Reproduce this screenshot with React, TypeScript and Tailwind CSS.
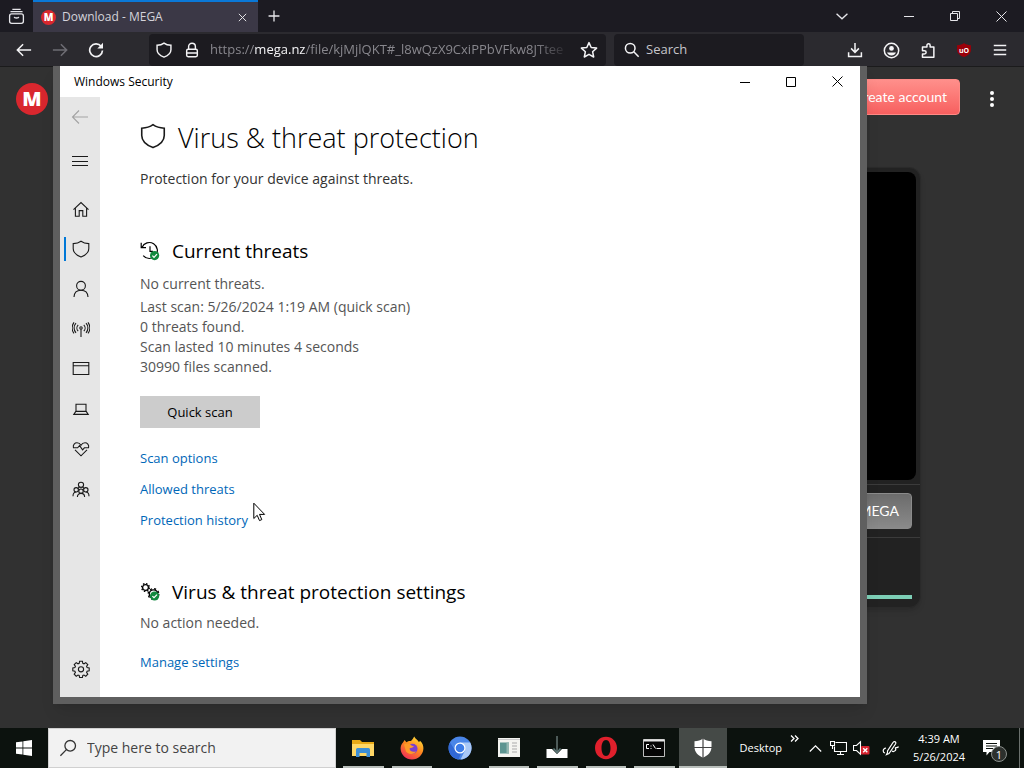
import type { ReactNode, SVGProps } from "react";
import clsx from "clsx";

type IconProps = SVGProps<SVGSVGElement>;

function Icon({ children, ...props }: IconProps) {
  return (
    <svg
      width="18"
      height="18"
      viewBox="0 0 18 18"
      fill="none"
      stroke="currentColor"
      strokeWidth="1.1"
      aria-hidden="true"
      {...props}
    >
      {children}
    </svg>
  );
}

const SHIELD =
  "M9 1.2C11 2.7 13.3 3.5 16.8 3.6V8.6C16.8 12.4 13.4 15.3 9 17C4.6 15.3 1.2 12.4 1.2 8.6V3.6C4.7 3.5 7 2.7 9 1.2Z";

function CheckBadge({ x, y }: { x: number; y: number }) {
  return (
    <g transform={`translate(${x} ${y})`}>
      <circle r="4.6" fill="#10893e" stroke="none" />
      <path d="M-2.2 0.1L-0.6 1.7L2.4 -1.4" stroke="#fff" strokeWidth="1.2" />
    </g>
  );
}

type NavItem = { label: string; icon: ReactNode; active?: boolean };

const navItems: NavItem[] = [
  {
    label: "Home",
    icon: <path d="M1.5 9.6L9 2.6L16.5 9.6M3.4 8V16.2H7.2V10.6H10.8V16.2H14.6V8" />,
  },
  { label: "Virus & threat protection", icon: <path d={SHIELD} />, active: true },
  {
    label: "Account protection",
    icon: (
      <>
        <circle cx="9" cy="5.8" r="4.4" />
        <path d="M2 17C2.2 12.8 5 10.2 9 10.2S15.8 12.8 16 17" />
      </>
    ),
  },
  {
    label: "Firewall & network protection",
    icon: (
      <>
        <circle cx="9" cy="8" r="1.2" />
        <path d="M9 9.2V17M6.2 4.8A4.6 4.6 0 0 0 6.2 11.2M11.8 4.8A4.6 4.6 0 0 1 11.8 11.2M4 3.2A7 7 0 0 0 4 12.8M14 3.2A7 7 0 0 1 14 12.8M2 2.4A9.500 9.500 0 0 0 2 13.4M16 2.4A9.500 9.500 0 0 1 16 13.4" />
      </>
    ),
  },
  { label: "App & browser control", icon: <path d="M1.2 2.500H16.8V14.500H1.2ZM1.2 5.8H16.8" /> },
  {
    label: "Device security",
    icon: <path d="M4 4.2H14V11.4H4ZM3.8 11.4L1.8 14.4H16.2L14.2 11.4" />,
  },
  {
    label: "Device performance & health",
    icon: (
      <path d="M1.4 7.6C.8 4.6 2.8 2.8 5 2.8C6.8 2.8 8.2 3.8 9 5.2C9.8 3.8 11.2 2.8 13 2.8C15.2 2.8 17.2 4.6 16.6 7.6M1 7.8H5.6L7.6 5.6L10.6 9.8L12.4 7.8H17M3 9.8L9 15.8L15 9.8" />
    ),
  },
  {
    label: "Family options",
    icon: (
      <>
        <circle cx="9" cy="4.8" r="2.6" />
        <circle cx="4.2" cy="9.800" r="2.2" />
        <circle cx="13.8" cy="9.800" r="2.2" />
        <circle cx="9" cy="11.2" r="2.2" />
        <path d="M1 16.200C1 13.600 2.2 12 4.2 12M17 16.200C17 13.600 15.8 12 13.8 12M5.4 17C5.4 14.800 6.800 13.4 9 13.4S12.600 14.800 12.600 17M6.2 8.6C6.4 7.8 7 7.3 7.6 7M11.8 8.6C11.6 7.8 11 7.3 10.4 7" />
      </>
    ),
  },
];

function MegaLogo({ className }: { className: string }) {
  return (
    <span
      className={clsx(
        "flex shrink-0 items-center justify-center rounded-full bg-[#d9272e] font-['Open_Sans',sans-serif] font-extrabold leading-none text-white",
        className
      )}
    >
      M
    </span>
  );
}

function TabStrip() {
  return (
    <div className="flex h-8 shrink-0 items-stretch bg-[#1c1b22] text-[#e6e6ea]">
      <button aria-label="Firefox View" className="flex w-[33px] items-center justify-center">
        <Icon width="17" height="17" strokeWidth="1.4">
          <rect x="1.7" y="6.2" width="14.6" height="10" rx="2.2" />
          <path d="M2.6 3.9H15.4M4.6 1.5H13.4M6.6 9.4C6.8 11 11.2 11 11.4 9.4" />
        </Icon>
      </button>
      <div className="flex w-[225px] items-center border-t-2 border-[#0a78d7] bg-[#3b3846] pl-2 pr-2">
        <MegaLogo className="size-[15px] text-[10px]" />
        <span className="ml-1.5 flex-1 text-xs text-[#d4d3da]">Download - MEGA</span>
        <button aria-label="Close tab" className="flex size-4 items-center justify-center">
          <Icon width="11" height="11" strokeWidth="1.6">
            <path d="M3 3L15 15M15 3L3 15" />
          </Icon>
        </button>
      </div>
      <button aria-label="New tab" className="flex w-8 items-center justify-center">
        <Icon width="14" height="14" strokeWidth="1.7">
          <path d="M2 9H16M9 2V16" />
        </Icon>
      </button>
      <div className="flex-1" />
      <button aria-label="List all tabs" className="mr-7 flex w-8 items-center justify-center">
        <Icon width="14" height="14" strokeWidth="1.7">
          <path d="M2 6L9 12.6L16 6" />
        </Icon>
      </button>
      <button aria-label="Minimize browser" className="flex w-[46px] items-center justify-end pr-[18px]">
        <Icon width="10" height="10" viewBox="0 0 10 10" strokeWidth="1">
          <path d="M0 5.5H10" />
        </Icon>
      </button>
      <button aria-label="Restore browser" className="flex w-[46px] items-center justify-end pr-[18px]">
        <Icon width="10" height="10" viewBox="0 0 10 10" strokeWidth="1">
          <path d="M.5 2.5H7.5V9.5H.5ZM2.5 2.5V.5H9.5V7.5H7.5" />
        </Icon>
      </button>
      <button aria-label="Close browser" className="flex w-[46px] items-center justify-center">
        <Icon width="11" height="11" viewBox="0 0 11 11" strokeWidth="1">
          <path d="M.5 .5L10.5 10.5M10.5 .5L.5 10.5" />
        </Icon>
      </button>
    </div>
  );
}

function Toolbar() {
  return (
    <div className="flex h-[34px] shrink-0 items-stretch bg-[#2b2a2f] pr-4 pt-0.5 text-[#f4f4f6]">
      <div className="flex w-[149px] items-center gap-4 pl-4">
        <button aria-label="Back">
          <Icon width="16" height="16" strokeWidth="1.7">
            <path d="M17 9H1.8M8 2.5L1.5 9L8 15.5" />
          </Icon>
        </button>
        <button aria-label="Forward" className="ml-1 text-[#6e6d74]">
          <Icon width="16" height="16" strokeWidth="1.7">
            <path d="M1 9H16.2M10 2.5L16.5 9L10 15.5" />
          </Icon>
        </button>
        <button aria-label="Reload" className="ml-1">
          <Icon width="16" height="16" strokeWidth="1.9">
            <path d="M14.8 4.8A7.2 7.2 0 1 0 16.3 9.6" />
            <path d="M16.9 .8V7.2H10.5Z" fill="currentColor" stroke="none" />
          </Icon>
        </button>
      </div>
      <div className="flex w-[457px] items-center rounded-sm bg-[#1c1b20] pl-[7px] pr-2">
        <Icon width="16" height="16" strokeWidth="1.6">
          <path d={SHIELD} />
        </Icon>
        <Icon width="16" height="18" strokeWidth="1.6" className="ml-3">
          <rect x="3" y="8.2" width="12" height="8.4" rx="1.6" />
          <path d="M5.2 8V5.2A3.8 3.8 0 0 1 12.8 5.2V8M3 12.4H15" />
        </Icon>
        <span className="ml-2.5 flex-1 whitespace-nowrap text-[13px] text-[#88878d] [mask-image:linear-gradient(to_right,#000_90%,transparent)]">
          https://<span className="text-[#f4f4f6]">mega.nz</span>/file/kjMjlQKT#_l8wQzX9CxiPPbVFkw8JTtee
        </span>
        <button aria-label="Bookmark this page" className="ml-2.5">
          <Icon strokeWidth="1.5">
            <path
              strokeLinejoin="round"
              d="M9 1.6L11.2 6.5L16.6 7.1L12.6 10.7L13.7 16L9 13.3L4.3 16L5.4 10.7L1.4 7.1L6.8 6.5Z"
            />
          </Icon>
        </button>
      </div>
      <label className="ml-2 flex w-[190px] items-center rounded-sm bg-[#1c1b20] pl-2.5">
        <Icon width="16" height="16" strokeWidth="1.7">
          <circle cx="7" cy="7" r="5.4" />
          <path d="M11 11L16.5 16.5" />
        </Icon>
        <input
          aria-label="Search"
          placeholder="Search"
          className="ml-1.5 w-0 flex-1 bg-transparent text-[13px] outline-none placeholder:text-[#c6c6cb]"
        />
      </label>
      <div className="flex flex-1 items-center justify-end gap-5">
        <button aria-label="Downloads">
          <Icon width="16" height="16" strokeWidth="1.7">
            <path d="M9 1V11.5M4.6 7.2L9 11.6L13.4 7.2M1.8 11.5V16.2H16.2V11.5" />
          </Icon>
        </button>
        <button aria-label="Account">
          <Icon width="17" height="17" strokeWidth="1.6">
            <circle cx="9" cy="9" r="7.6" />
            <circle cx="9" cy="6.8" r="2.5" fill="currentColor" stroke="none" />
            <path d="M4.2 11H13.8C12.8 13.2 11.2 14.2 9 14.2S5.2 13.2 4.2 11Z" fill="currentColor" stroke="none" />
          </Icon>
        </button>
        <button aria-label="Extensions">
          <Icon width="16" height="17" strokeWidth="1.7">
            <path
              strokeLinejoin="round"
              d="M2.8 5H7.8V3.2A1.7 1.7 0 0 1 11.4 3.2V5H15.6V16.6H2.8V13H5A1.7 1.7 0 0 0 5 9.2H2.8Z"
            />
          </Icon>
        </button>
        <button aria-label="uBlock Origin" className="relative flex size-4 items-center justify-center">
          <Icon width="16" height="16" className="absolute inset-0">
            <path d={SHIELD} fill="#9b0009" stroke="none" />
          </Icon>
          <span className="relative text-[7px] font-bold leading-none text-white">uO</span>
        </button>
        <button aria-label="Open application menu">
          <Icon width="16" height="16" strokeWidth="1.7">
            <path d="M2 4H16M2 9H16M2 14H16" />
          </Icon>
        </button>
      </div>
    </div>
  );
}

function MegaPage() {
  return (
    <main className="flex-1 overflow-hidden border-t border-[#1b1b1c] bg-[#313131] font-[Lato,sans-serif] text-white">
      <header className="flex h-16 items-center pl-4 pr-6">
        <MegaLogo className="size-8 text-xl" />
        <button className="-mt-1 ml-auto h-9 rounded border border-[#ff8a85] bg-linear-to-b from-[#ff8f8b] to-[#f75f5f] px-3 text-sm">
          Create account
        </button>
        <button aria-label="Menu" className="ml-6 flex w-4 flex-col items-center gap-0.5">
          <i className="size-1 rounded-full bg-white" />
          <i className="size-1 rounded-full bg-white" />
          <i className="size-1 rounded-full bg-white" />
        </button>
      </header>
      <section className="mx-auto mt-9 w-[818px] rounded-xl border border-[#2a2a2a] bg-[#222] shadow-md">
        <div className="mx-1 mt-1 h-[308px] rounded-lg bg-black" />
        <div className="mt-1 flex h-[54px] items-center justify-end border-y border-[#3b3b3b] pr-2">
          <button className="h-9 rounded border border-[#8b8b8b] bg-linear-to-b from-[#6c6c6c] to-[#8a8a8a] px-3 text-sm">
            MEGA
          </button>
        </div>
        <div className="flex h-[69px] items-end px-2 pb-2">
          <div className="h-1 w-full bg-[#7dcfb6]" />
        </div>
      </section>
    </main>
  );
}

function TitleBar() {
  return (
    <div className="flex h-[31px] items-stretch pl-3.5 text-xs text-black">
      <span className="flex-1 self-center">Windows Security</span>
      <button aria-label="Minimize" className="flex w-[46px] items-center justify-center">
        <Icon width="10" height="10" viewBox="0 0 10 10" strokeWidth="1">
          <path d="M0 5.5H10" />
        </Icon>
      </button>
      <button aria-label="Maximize" className="flex w-[46px] items-center justify-center">
        <Icon width="10" height="10" viewBox="0 0 10 10" strokeWidth="1">
          <path d="M.5 .5H9.5V9.5H.5Z" />
        </Icon>
      </button>
      <button aria-label="Close" className="flex w-[46px] items-center justify-center">
        <Icon width="11" height="11" viewBox="0 0 11 11" strokeWidth="1">
          <path d="M.5 .5L10.5 10.5M10.5 .5L.5 10.5" />
        </Icon>
      </button>
    </div>
  );
}

function SideNav() {
  return (
    <nav className="flex w-10 shrink-0 flex-col bg-[#e6e6e6] text-[#1a1a1a]">
      <button aria-label="Back" className="flex h-10 items-center justify-center text-[#a3a3a3]">
        <Icon>
          <path d="M17 9H1.5M8 2.5L1.5 9L8 15.5" />
        </Icon>
      </button>
      <button aria-label="Open navigation" className="mt-1 flex h-10 items-center justify-center">
        <Icon strokeWidth="1">
          <path d="M1 4.5H17M1 9.5H17M1 13.5H17" />
        </Icon>
      </button>
      <div className="mt-2 flex flex-col">
        {navItems.map((item) => (
          <a
            key={item.label}
            href="#"
            aria-label={item.label}
            className="relative flex h-10 items-center justify-center pl-0.5"
          >
            {item.active && <span className="absolute left-1 h-6 w-0.5 bg-[#0078d7]" />}
            <Icon>{item.icon}</Icon>
          </a>
        ))}
      </div>
      <a href="#" aria-label="Settings" className="mt-auto mb-2 flex h-10 items-center justify-center pl-0.5">
        <Icon>
          <path d="M7.6 1.2h2.8l.4 2.1 1.2.5 1.8-1.2 2 2-1.2 1.8.5 1.2 2.1.4v2.8l-2.1.4-.5 1.2 1.2 1.8-2 2-1.8-1.2-1.2.5-.4 2.1H7.6l-.4-2.1-1.2-.5-1.8 1.2-2-2 1.2-1.8-.5-1.2L.8 10.8V8l2.1-.4.5-1.2-1.2-1.8 2-2L6 3.8l1.2-.5z" />
          <circle cx="9" cy="9.3" r="2.6" />
        </Icon>
      </a>
    </nav>
  );
}

function TextLink({ children, className }: { children: ReactNode; className?: string }) {
  return (
    <a href="#" className={clsx("w-fit text-[13px] leading-5 text-[#0067b8]", className)}>
      {children}
    </a>
  );
}

function SecurityWindow() {
  return (
    <div className="absolute left-[53px] top-[66px] z-10 flex h-[638px] w-[814px] flex-col border-x-[7px] border-b-[7px] border-[#5f5f5f] bg-white shadow-lg">
      <TitleBar />
      <div className="flex min-h-0 flex-1">
        <SideNav />
        <div className="flex flex-1 flex-col pl-10 pt-[23px] text-sm leading-5 text-[#555]">
          <div className="flex items-center text-[#1a1a1a]">
            <Icon width="26" height="26" strokeWidth="1.1" className="-mt-1">
              <path d={SHIELD} />
            </Icon>
            <h1 className="ml-3 text-[27px] font-light leading-9 text-black">Virus &amp; threat protection</h1>
          </div>
          <p className="mt-[13px] text-[#333]">Protection for your device against threats.</p>

          <div className="mt-12 flex items-center text-black">
            <Icon width="20" height="20" viewBox="0 0 20 20" strokeWidth="1.2">
              <path d="M2 6.4A8 8 0 1 1 3.2 14.6M1.2 1.8V6.6H6M10 5.2V10.4H13" />
              <CheckBadge x={14.6} y={14.6} />
            </Icon>
            <h2 className="ml-3 text-[19px] leading-7">Current threats</h2>
          </div>
          <p className="mt-[9px]">No current threats.</p>
          <p className="mt-[3px]">Last scan: 5/26/2024 1:19 AM (quick scan)</p>
          <p>0 threats found.</p>
          <p>Scan lasted 10 minutes 4 seconds</p>
          <p>30990 files scanned.</p>
          <button className="mt-[19px] h-8 w-30 shrink-0 bg-[#ccc] text-[13px] text-black">
            Quick scan
          </button>
          <div className="mt-5 flex flex-col gap-[11px]">
            <TextLink>Scan options</TextLink>
            <TextLink>Allowed threats</TextLink>
            <TextLink>Protection history</TextLink>
          </div>

          <div className="mt-12 flex items-center text-black">
            <Icon width="20" height="20" viewBox="0 0 20 20" strokeWidth="1.3">
              <circle cx="5.500" cy="5.500" r="2.900" />
              <circle cx="5.500" cy="5.500" r="3.900" strokeDasharray="1.530 1.530" />
              <circle cx="13.500" cy="12" r="4.200" />
              <circle cx="13.500" cy="12" r="5.300" strokeDasharray="2.080 2.080" />
              <CheckBadge x={14.6} y={14} />
            </Icon>
            <h2 className="ml-3 text-[19px] leading-7">Virus &amp; threat protection settings</h2>
          </div>
          <p className="mt-[7px]">No action needed.</p>
          <TextLink className="mt-[19px]">Manage settings</TextLink>
        </div>
      </div>
    </div>
  );
}

type TaskApp = { name: string; icon: ReactNode; running?: boolean; focused?: boolean };

const taskApps: TaskApp[] = [
  {
    name: "File Explorer",
    running: true,
    icon: (
      <>
        <path d="M1 4H9L11 6H23V20H1Z" fill="#e8a917" />
        <path d="M1 8H23V20H1Z" fill="#ffd766" />
        <path d="M5 21V13.5Q5 12 6.500 12H17.500Q19 12 19 13.500V21H15.500V17H8.500V21Z" fill="#3d8fd6" />
      </>
    ),
  },
  {
    name: "Firefox",
    running: true,
    icon: (
      <>
        <defs>
          <linearGradient id="fox" x1="0.8" y1="0" x2="0.2" y2="1">
            <stop offset="0" stopColor="#ffe13a" />
            <stop offset="0.45" stopColor="#ff8a1f" />
            <stop offset="1" stopColor="#f0285a" />
          </linearGradient>
        </defs>
        <path
          d="M3 6.500L4.600 4L6.400 6.200C8 5 9.500 4.800 11 5C12.500 3.500 13.500 2 14.200 .5C15.500 3 18 4.300 19 6.200L20 4.800C22.500 7 23.600 10 23.400 12.800C23 19 18 23.500 12 23.500S.8 19 .6 12.800C.5 10.200 1.500 8 3 6.500Z"
          fill="url(#fox)"
        />
        <circle cx="12.500" cy="12.800" r="5" fill="#7a3fd0" />
        <path d="M4 8.500C7 6.500 10 7.500 11.500 9.500L14 10.500C12.500 12 11 11.500 9.500 12.500C10 15.500 13 16.500 16 15.200C14.500 18.500 8.500 19 6 15.500Z" fill="#ff9a28" />
      </>
    ),
  },
  {
    name: "Chromium",
    icon: (
      <>
        <circle cx="12" cy="12" r="11.500" fill="#4a86e8" />
        <path d="M12 6.500H22.200A11.500 11.500 0 0 1 12.500 23.500L17 14.500Z" fill="#a9c8f7" />
        <path d="M2 6.500L7.500 15A5.500 5.500 0 0 0 13 17.300L10.500 23.400A11.500 11.500 0 0 1 2 6.500Z" fill="#3168d4" />
        <circle cx="12" cy="12" r="5.500" fill="#fff" />
        <circle cx="12" cy="12" r="4.300" fill="#3d7ce8" />
      </>
    ),
  },
  {
    name: "System Properties",
    running: true,
    icon: (
      <>
        <path d="M1 2H23V21H1Z" fill="#f4f4f0" />
        <path d="M3 6.500H12V17.500H3Z" fill="#5c9490" />
        <path d="M9.500 6.500H12V17.500H9.500Z" fill="#93b7b1" />
        <path d="M15 7H20M15 10H20M15 13H20M15 16H20" stroke="#aaa" />
        <path d="M1 3.500H23" stroke="#ccc" />
      </>
    ),
  },
  {
    name: "Download Manager",
    running: true,
    icon: (
      <>
        <path d="M1.500 13H7L12 18L17 13H22.500V22H1.500Z" fill="#fff" />
        <path d="M12 0V16" stroke="#8fa3a3" />
        <path d="M8.500 12.500L12 16.500L15.500 12.500" fill="none" stroke="#5f7a7a" strokeWidth="1.500" />
      </>
    ),
  },
  {
    name: "Opera",
    running: true,
    icon: (
      <path
        fillRule="evenodd"
        d="M12 .8C18 .8 23 5.500 23 12S18 23.200 12 23.200S1 18.500 1 12S6 .8 12 .8ZM12 4C9.200 4 7.500 7.500 7.500 12S9.200 20 12 20S16.500 16.500 16.500 12S14.800 4 12 4Z"
        fill="#e0202c"
      />
    ),
  },
  {
    name: "Command Prompt",
    running: true,
    icon: (
      <>
        <path d="M1.500 3.500H22.500V20.500H1.500Z" fill="#050505" stroke="#bdbdbd" />
        <path d="M1.500 4.500H22.500" stroke="#e6e6e6" strokeWidth="2" />
        <path d="M7 8.500H4.500V12.500H7M9 9.500V10.500M9 12V13M11 8.500L13.500 12.500M14.500 12.500H19" stroke="#fff" fill="none" />
      </>
    ),
  },
  {
    name: "Windows Security",
    running: true,
    focused: true,
    icon: (
      <>
        <path
          d="M12 2.500C14.500 4.500 17 5.200 20.500 5.300V11C20.500 16 17 19.500 12 21.700C7 19.500 3.500 16 3.500 11V5.300C7 5.200 9.500 4.500 12 2.500Z"
          fill="#fff"
        />
        <path d="M12 2V22M3 11.500H21" stroke="#444" strokeWidth="1.200" />
      </>
    ),
  },
];

function Taskbar() {
  return (
    <footer className="flex h-10 shrink-0 items-stretch bg-[#0c120e] text-white">
      <button aria-label="Start" className="flex w-12 items-center justify-center">
        <svg width="16" height="16" viewBox="0 0 16 16" fill="#fff" aria-hidden="true">
          <path d="M0 2.300L6.500 1.400V7.600H0ZM7.300 1.300L16 0V7.600H7.300ZM0 8.400H6.500V14.600L0 13.700ZM7.300 8.400H16V16L7.300 14.700Z" />
        </svg>
      </button>
      <label className="flex w-72 items-center border border-[#d0d0d0] bg-[#f2f2f2] pl-2.5 text-[#333]">
        <Icon strokeWidth="1.3">
          <circle cx="11.200" cy="6.800" r="5.300" />
          <path d="M7.400 10.600L1.400 16.800" />
        </Icon>
        <input
          aria-label="Type here to search"
          placeholder="Type here to search"
          className="ml-2.5 w-0 flex-1 bg-transparent text-sm outline-none placeholder:text-[#444]"
        />
      </label>
      <div className="ml-[3px] flex w-[388px]">
        {taskApps.map((app) => (
          <button
            key={app.name}
            aria-label={app.name}
            className={clsx(
              "relative flex flex-1 items-center justify-center",
              app.focused && "bg-[#454a47]"
            )}
          >
            <svg width="24" height="24" viewBox="0 0 24 24" aria-hidden="true">
              {app.icon}
            </svg>
            {app.running && (
              <span
                className={clsx(
                  "absolute bottom-0 h-0.5 bg-[#b9bfbb]",
                  app.focused ? "inset-x-0" : "inset-x-1"
                )}
              />
            )}
          </button>
        ))}
      </div>
      <div className="flex flex-1 items-center justify-end">
        <span className="text-[11px]">Desktop</span>
        <button aria-label="More toolbars" className="ml-2 self-start pt-1.5">
          <Icon width="9" height="9" viewBox="0 0 9 9" strokeWidth="1.3">
            <path d="M1 1.500L4 4.500L1 7.500M5 1.500L8 4.500L5 7.500" />
          </Icon>
        </button>
        <button aria-label="Show hidden icons" className="ml-2.5">
          <Icon width="13" height="13" viewBox="0 0 13 13" strokeWidth="1.200">
            <path d="M.8 9.500L6.500 3.800L12.200 9.500" />
          </Icon>
        </button>
        <button aria-label="Network" className="ml-2">
          <Icon width="17" height="16" viewBox="0 0 17 16">
            <path d="M5.500 2.500H16.500V11.500H4.500V6.500M10.500 11.500V14.500M7 14.500H14M.5 1.500H4.500V5.500H.5ZM2.500 5.500V9" />
          </Icon>
        </button>
        <button aria-label="Volume muted" className="ml-1.5">
          <Icon width="17" height="16" viewBox="0 0 17 16">
            <path d="M.5 5.500H3.500L7.500 1.800V14.200L3.500 10.500H.5Z" />
            <rect x="8" y="6" width="8.500" height="8.500" rx="1" fill="#d8232f" stroke="none" />
            <path d="M10.200 8.200L14.300 12.300M14.300 8.200L10.200 12.300" stroke="#fff" strokeWidth="1.400" />
          </Icon>
        </button>
        <button aria-label="Pen" className="ml-3">
          <Icon width="17" height="16" viewBox="0 0 17 16" strokeWidth="1.200">
            <path d="M5.500 12.500L4.500 14.500L7 13.500L13.500 4C14.500 2 12.500 .5 11 2.500L5.500 11ZM4 8C.5 8.500 .5 12.500 3 13M10 11C12 12.500 14.500 10 13.500 8.500C12.500 7 16 8.500 16.500 6.500" />
          </Icon>
        </button>
        <div className="ml-3 w-14 text-center text-[11px] leading-[18px] whitespace-nowrap">
          <div>4:39 AM</div>
          <div>5/26/2024</div>
        </div>
        <button aria-label="Notifications" className="relative ml-4 size-6">
          <Icon width="17" height="16" viewBox="0 0 17 16" className="absolute left-0 top-1">
            <path d="M0 0H17V12H6.500L3.500 15.500V12H0Z" fill="#fff" stroke="none" />
            <path d="M3 3.500H14M3 6H14M3 8.500H10" stroke="#0c120e" />
          </Icon>
          <span className="absolute left-2 top-2.5 flex size-4 items-center justify-center rounded-full border border-[#8a8f8c] bg-[#2c302d] text-[11px] leading-none">
            1
          </span>
        </button>
        <span className="ml-3 mr-1 h-full w-px bg-[#6b706d]" />
      </div>
    </footer>
  );
}

export default function App() {
  return (
    <div className="relative flex h-screen min-h-[720px] flex-col overflow-hidden bg-[#313131] font-['Open_Sans','Noto_Sans',sans-serif]">
      <TabStrip />
      <Toolbar />
      <MegaPage />
      <Taskbar />
      <SecurityWindow />
      {/* Mouse pointer */}
      <svg
        className="pointer-events-none absolute left-[253px] top-[502px] z-20"
        width="13"
        height="20"
        viewBox="0 0 13 20"
        fill="#fff"
        stroke="#000"
        aria-hidden="true"
      >
        <path d="M.8 1.200V16.500L4.200 13.300L6.500 18.600L8.800 17.600L6.500 12.400H11.600Z" />
      </svg>
    </div>
  );
}
